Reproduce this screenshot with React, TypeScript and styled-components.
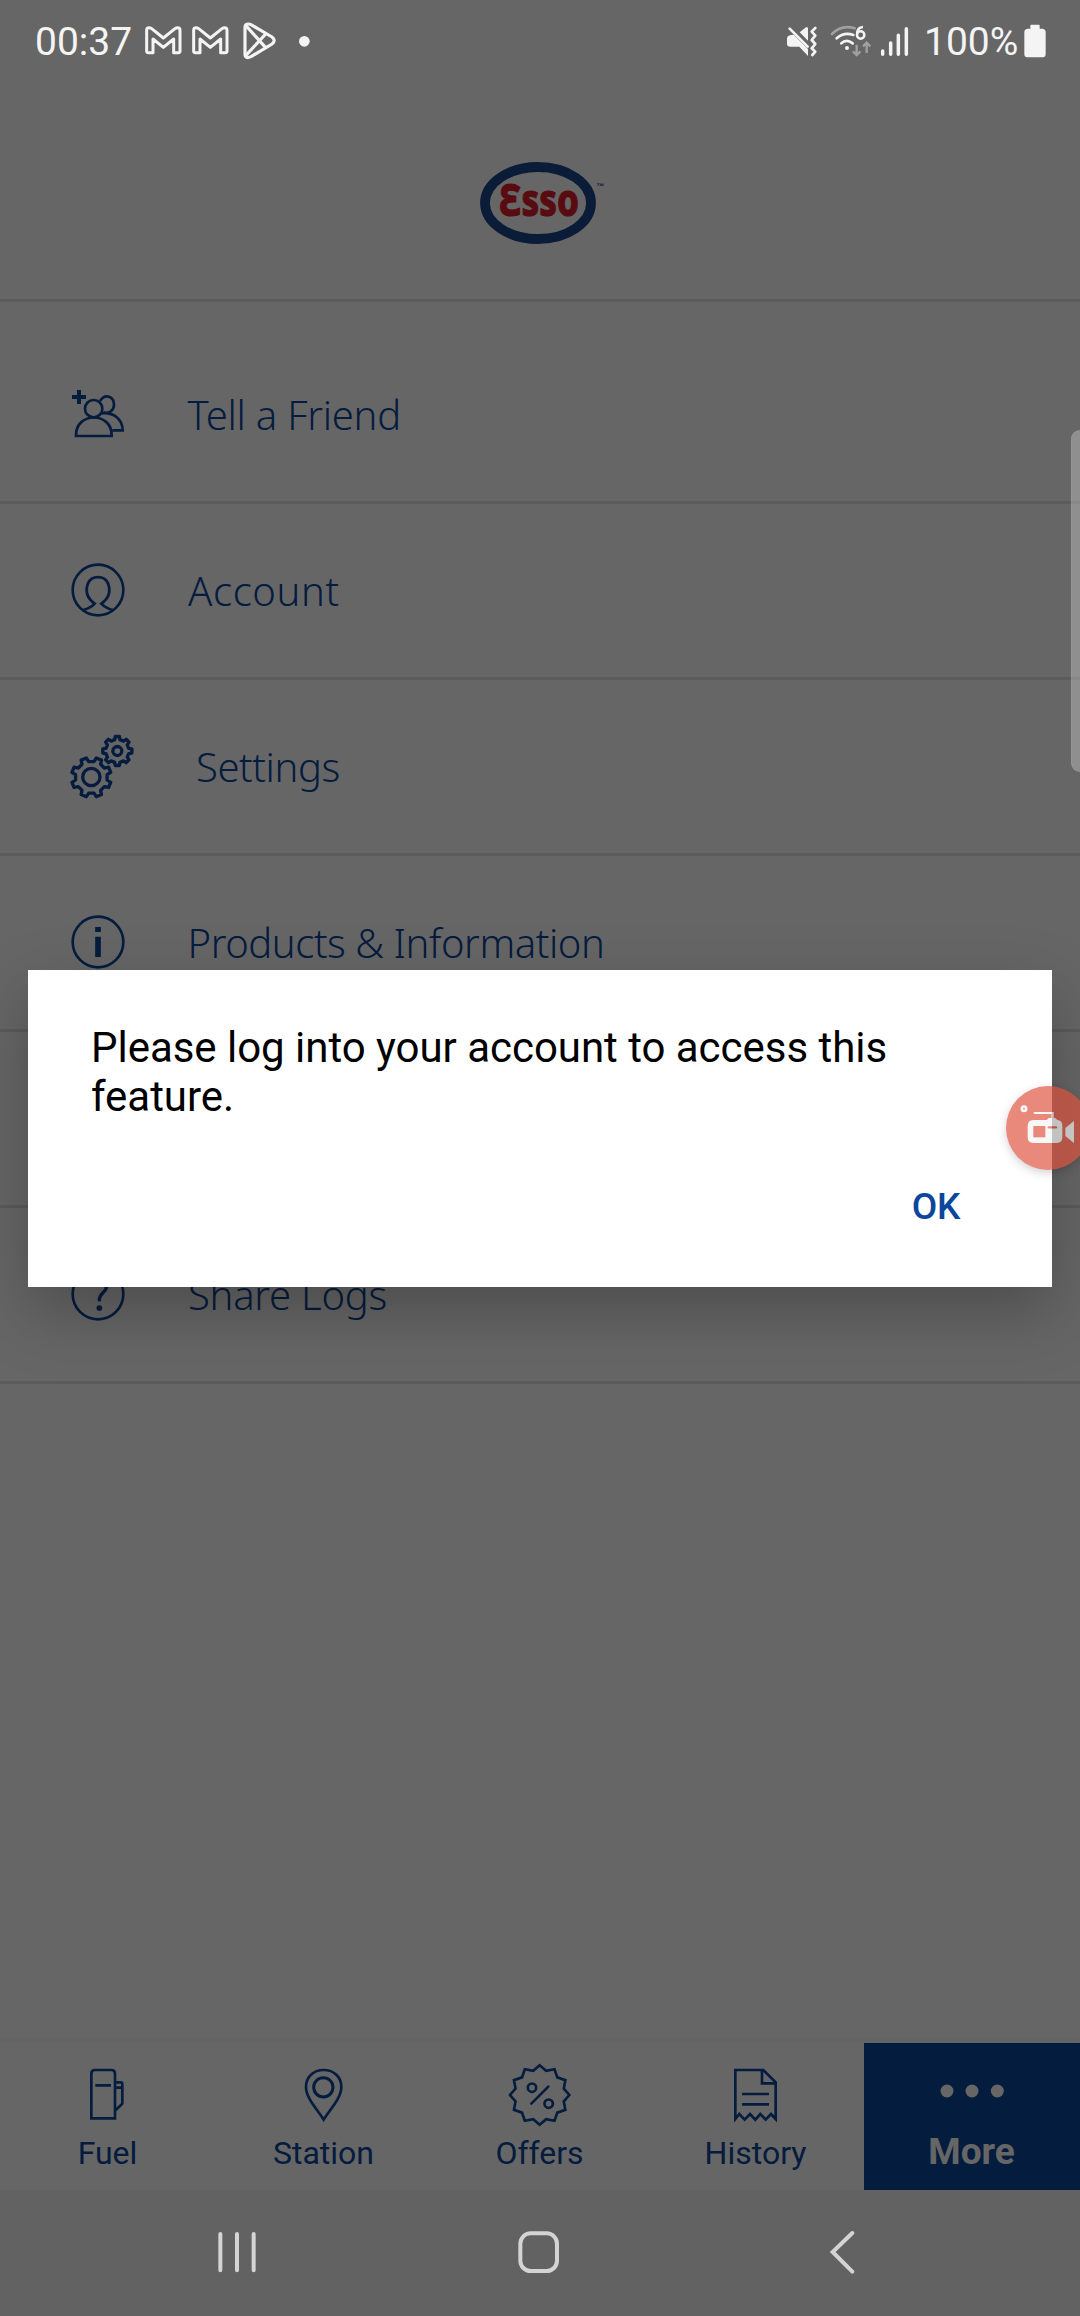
import React from "react";
import styled, { createGlobalStyle } from "styled-components";

const BLUE = "#0c469c";

const GlobalStyle = createGlobalStyle`
  * { box-sizing: border-box; }
  body { margin: 0; background: #fff; font-family: Roboto, "Noto Sans", sans-serif; }
  svg { display: block; flex: none; overflow: visible; }
`;

const Screen = styled.div`
  position: relative;
  display: flex;
  flex-direction: column;
  width: 1080px;
  height: 2316px;
  overflow: hidden;
  background: #fff;
`;

const Scrim = styled.div`
  position: absolute;
  inset: 0;
  z-index: 1;
  background: rgba(0, 0, 0, 0.6);
`;

const StatusBar = styled.div`
  position: relative;
  z-index: 2;
  display: flex;
  justify-content: space-between;
  align-items: center;
  height: 82px;
  padding: 0 34px 0 35px;
  color: #f4f4f4;
  font-size: 39px;
  line-height: 46px;
`;

const StatusGroup = styled.div`
  display: flex;
  align-items: center;
`;

const StatusText = styled.span<{ $width: number }>`
  width: ${(p) => p.$width}px;
  padding-top: 2px;
  white-space: nowrap;
`;

const Header = styled.header`
  display: flex;
  justify-content: center;
  height: 220px;
  padding-top: 76.5px;
  border-bottom: 3px solid #e4e4e4;
`;

const Menu = styled.ul`
  flex: 1;
  margin: 0;
  padding: 26px 0 0;
  list-style: none;
`;

const MenuRow = styled.li`
  display: flex;
  align-items: center;
  height: 176px;
  padding: 0 0 1px 70px;
  border-bottom: 3px solid #e4e4e4;
`;

const MenuIcon = styled.span<{ $width: number }>`
  flex: none;
  width: ${(p) => p.$width}px;
`;

const MenuLabel = styled.span<{ $spacing: number }>`
  padding-top: 1px;
  color: ${BLUE};
  font-family: "Noto Sans", "Open Sans", sans-serif;
  font-weight: 300;
  font-size: 40px;
  line-height: 54px;
  letter-spacing: ${(p) => p.$spacing}px;
  white-space: nowrap;
`;

const TabBar = styled.nav`
  display: flex;
  height: 153px;
  border-top: 6px solid #fafafa;
`;

const Tab = styled.div<{ $active?: boolean }>`
  display: flex;
  flex-direction: column;
  align-items: center;
  justify-content: flex-end;
  width: 216px;
  padding: 0 1px ${(p) => (p.$active ? 18 : 17)}px 0;
  background: ${(p) => (p.$active ? BLUE : "transparent")};
  color: ${(p) => (p.$active ? "#fff" : BLUE)};
  font-size: ${(p) => (p.$active ? 37 : 32)}px;
  font-weight: ${(p) => (p.$active ? 700 : 400)};
  line-height: 40px;
`;

const TabIcon = styled.span<{ $active?: boolean }>`
  display: flex;
  align-items: center;
  justify-content: center;
  height: 74px;
  margin-bottom: ${(p) => (p.$active ? 1 : 2)}px;
`;

const SystemNav = styled.div`
  position: relative;
  z-index: 2;
  display: flex;
  align-items: center;
  height: 126px;
  padding: 0 0 2px 217px;
  background: #626262;
`;

const Dialog = styled.div`
  position: absolute;
  z-index: 3;
  left: 28px;
  top: 970px;
  display: flex;
  flex-direction: column;
  justify-content: space-between;
  width: 1024px;
  height: 317px;
  padding: 53px 91.5px 58px 63px;
  background: #fff;
  box-shadow: 0 24px 60px rgba(0, 0, 0, 0.25);
`;

const Message = styled.p`
  margin: 0;
  color: #000;
  font-size: 42px;
  line-height: 49px;
  letter-spacing: -0.03px;
`;

const OkButton = styled.button`
  align-self: flex-end;
  padding: 0;
  border: 0;
  background: none;
  color: ${BLUE};
  font-family: Roboto, sans-serif;
  font-size: 37px;
  font-weight: 500;
  line-height: 44px;
`;

const EdgeHandle = styled.div`
  position: absolute;
  z-index: 2;
  top: 430px;
  right: 0;
  width: 9.5px;
  height: 342px;
  border: 1px solid rgba(255, 255, 255, 0.06);
  border-right: 0;
  border-radius: 10px 0 0 10px;
  background: rgba(255, 255, 255, 0.27);
`;

const RecordBubble = styled.div`
  position: absolute;
  z-index: 4;
  left: 1006px;
  top: 1086px;
  width: 84px;
  height: 84px;
  border-radius: 50%;
  background: #de523d;
  opacity: 0.68;
  box-shadow: 0 3px 8px rgba(0, 0, 0, 0.25);
`;

type Box = [number, number, number, number];

/* Icons are drawn on a grid three times finer than the layout pixel. */
function Icon({ box, stroke = BLUE, width = 8, children }: {
  box: Box;
  stroke?: string;
  width?: number;
  children: React.ReactNode;
}) {
  return (
    <svg
      viewBox={box.join(" ")}
      width={box[2] / 3}
      height={box[3] / 3}
      fill="none"
      stroke={stroke}
      strokeWidth={width}
    >
      {children}
    </svg>
  );
}

function polar(cx: number, cy: number, r: number, deg: number) {
  const a = ((deg - 90) * Math.PI) / 180;
  return `${(cx + r * Math.cos(a)).toFixed(1)} ${(cy + r * Math.sin(a)).toFixed(1)}`;
}

function gear(cx: number, cy: number, outer: number, inner: number, turn: number) {
  const pts: string[] = [];
  for (let i = 0; i < 8; i++) {
    const a = i * 45 + turn;
    pts.push(polar(cx, cy, inner, a - 13), polar(cx, cy, outer, a - 8));
    pts.push(polar(cx, cy, outer, a + 8), polar(cx, cy, inner, a + 13));
  }
  return `M${pts.join("L")}Z`;
}

function seal(cx: number, cy: number) {
  const pts = Array.from({ length: 24 }, (_, i) => polar(cx, cy, i % 2 ? 75 : 89, i * 15));
  return `M${pts.join("L")}Z`;
}

const Gap = styled.span<{ $w: number }>`
  width: ${(p) => p.$w}px;
`;

const GmailIcon = () => (
  <Icon box={[435, 70, 110, 108]} stroke="#f4f4f4" width={9}>
    <path
      d="M440 92V155Q440 159 445 159H459V118L490 143L521 118V159H535Q540 159 540 155V92Q540 84 533 84Q529 84 525 87L490 115L455 87Q451 84 447 84Q440 84 440 92Z"
      strokeLinejoin="round"
    />
  </Icon>
);

const PlayIcon = () => (
  <Icon box={[730, 68, 100, 112]} stroke="#f4f4f4" width={9.5}>
    <path d="M736 84Q736 74 746 74Q750 74 754 76L817 113Q830 123 817 134L754 172Q736 180 736 164Z" />
    <path d="M738 78L798 145M738 169L798 104" />
  </Icon>
);

const MuteIcon = () => (
  <Icon box={[78, 78, 94, 92]} stroke="none">
    <path d="M81 117Q81 108 90 106L101 104L144 147V168L118 140H91Q81 140 81 131Z" fill="#f4f4f4" />
    <path d="M119 97L136 83Q144 77 144 87V122Z" fill="#f4f4f4" />
    <path d="M89 86L143 140" stroke="#f4f4f4" strokeWidth="8" strokeLinecap="round" />
    <path d="M166 84L155 95L166 107L155 120L166 132L155 145L166 155L157 165" stroke="#f4f4f4" strokeWidth="8" strokeLinejoin="round" strokeLinecap="round" />
  </Icon>
);

const WifiIcon = () => (
  <Icon box={[214, 78, 122, 94]} width={8}>
    <path d="M217 105Q246 76 285 88" stroke="#a0a0a0" strokeLinecap="round" />
    <path d="M231 118Q253 98 281 108M245 133Q261 119 279 133" stroke="#f4f4f4" strokeLinecap="round" />
    <circle cx="262" cy="147" r="6" fill="#f4f4f4" stroke="none" />
    <path d="M310 84C295 85 292 96 292 106" stroke="#f4f4f4" strokeWidth="7" />
    <circle cx="303" cy="108" r="11" stroke="#f4f4f4" strokeWidth="7.500" />
    <path d="M291 137V168M280 157L291 168L302 157M321 162V132M310 142L321 131L332 142" stroke="#a0a0a0" strokeWidth="7" />
  </Icon>
);

const SignalIcon = () => (
  <Icon box={[364, 78, 82, 92]} stroke="#f4f4f4" width={10.5}>
    <path d="M369 153V163M393 129V163M416 106V163M440 86V163" strokeLinecap="round" />
  </Icon>
);

const BatteryIcon = () => (
  <Icon box={[791, 74, 66, 101]} stroke="none">
    <path d="M810 79Q810 76 813 76H835Q838 76 838 79V88H847Q856 90 856 98V164Q856 174 847 174H801Q792 174 792 164V98Q792 90 801 88H810Z" fill="#f4f4f4" />
  </Icon>
);

const LogoSlot = styled.div`
  padding-left: 2px;
`;

const EssoLogo = () => (
  <svg viewBox="476 158 130 88" width="130" height="88" role="img" aria-label="Esso">
    <ellipse cx="538" cy="202" rx="53" ry="36" fill="#fff" stroke="#1c468c" strokeWidth="9.800" />
    <text
      x="499"
      y="214.500"
      fill="#dc1c28"
      stroke="#dc1c28"
      strokeWidth="1"
      strokeLinejoin="round"
      fontFamily="'Noto Sans', sans-serif"
      fontWeight="800"
      fontSize="44"
      textLength="80"
      lengthAdjust="spacingAndGlyphs"
    >
      Ɛsso
    </text>
    <text x="596.500" y="188" fill="#1c468c" fontSize="8" fontWeight="700" fontFamily="'Liberation Sans', sans-serif">™</text>
  </svg>
);

const FriendsIcon = () => (
  <Icon box={[90, 90, 168, 150]}>
    <path d="M96 114H138M117 93V135" strokeWidth="12" />
    <circle cx="161" cy="149" r="26" />
    <path d="M108 231V228C108 158 215 158 215 228V231Z" />
    <path d="M180 126C196 102 222 113 222 137C222 154 207 165 190 160M184 163C220 158 248 180 248 214H217" />
  </Icon>
);

const AccountIcon = () => (
  <Icon box={[90, 606, 168, 168]}>
    <circle cx="174" cy="690" r="76" />
    <path d="M130 750C146 746 154 742 164 731C138 713 137 689 144 670C155 645 193 645 204 670C211 689 210 713 184 731C194 742 202 746 218 750" strokeWidth="8.500" />
  </Icon>
);

const SettingsIcon = () => (
  <Icon box={[90, 220, 192, 194]} width={10}>
    <g strokeLinejoin="round">
      <path d={gear(232, 271, 44, 35, 0)} />
      <path d={gear(154, 350, 60, 48, 22.5)} />
    </g>
    <circle cx="232" cy="271" r="13.500" />
    <circle cx="154" cy="349" r="26" />
  </Icon>
);

const InfoIcon = () => (
  <Icon box={[90, 72, 168, 168]}>
    <circle cx="174" cy="156" r="76" />
    <path d="M174 111V126M174 140V201" strokeWidth="17" />
  </Icon>
);

const HelpIcon = () => (
  <Icon box={[210, 198, 168, 168]}>
    <circle cx="294" cy="282" r="76" />
    <path d="M274 254C275 233 320 232 320 257C320 278 298 277 298 300" strokeWidth="10" strokeLinecap="round" />
    <circle cx="298" cy="324" r="8.500" fill={BLUE} stroke="none" />
  </Icon>
);

const FuelIcon = () => (
  <Icon box={[270, 112, 106, 222]}>
    <path d="M274 296V162Q274 151 285 151H334Q345 151 345 162V296ZM286 197H333M345 188H362Q367 188 367 193V252L345 273M345 204H367" />
  </Icon>
);

const StationIcon = () => (
  <Icon box={[909, 112, 122, 222]}>
    <path d="M971 300C954 271 918 237 918 202C918 172 940 151 971 151C1002 151 1024 172 1024 202C1024 237 988 271 971 300Z" />
    <circle cx="970" cy="203" r="29" strokeWidth="9" />
  </Icon>
);

const OffersIcon = () => (
  <Icon box={[260, 112, 196, 222]}>
    <path d={seal(358, 226)} />
    <circle cx="335" cy="204" r="12.500" />
    <circle cx="385" cy="252" r="12.500" />
    <path d="M333 252L384 201" strokeLinecap="round" strokeWidth="8" />
  </Icon>
);

const HistoryIcon = () => (
  <Icon box={[942, 112, 130, 222]}>
    <path d="M946 298V151H1030L1067 188V298L1053 283L1037 300L1021 283L1006 300L990 283L974 300L958 283ZM1026 151V191H1067M966 223H1047M966 254H1047" />
  </Icon>
);

const MoreIcon = () => (
  <Icon box={[475, 109, 196, 222]} stroke="none">
    <g fill="#fff">
      <circle cx="499" cy="211" r="19.500" />
      <circle cx="574" cy="211" r="19.500" />
      <circle cx="650" cy="211" r="19.500" />
    </g>
  </Icon>
);

const NavItem = styled.span<{ $before: number }>`
  margin-left: ${(p) => p.$before}px;
`;

const rows = [
  { label: "Tell a Friend", icon: <FriendsIcon />, slot: 117.5, spacing: -0.25 },
  { label: "Account", icon: <AccountIcon />, slot: 118, spacing: 0.65 },
  { label: "Settings", icon: <SettingsIcon />, slot: 126, spacing: -0.4 },
  { label: "Products & Information", icon: <InfoIcon />, slot: 117.5, spacing: -0.43 },
  { label: "", icon: null, slot: 117, spacing: 0 },
  { label: "Share Logs", icon: <HelpIcon />, slot: 118, spacing: -0.25 },
];

const tabs = [
  { label: "Fuel", icon: <FuelIcon /> },
  { label: "Station", icon: <StationIcon /> },
  { label: "Offers", icon: <OffersIcon /> },
  { label: "History", icon: <HistoryIcon /> },
  { label: "More", icon: <MoreIcon />, active: true },
];

export default function App() {
  return (
    <>
      <GlobalStyle />
      <Screen>
        <StatusBar>
          <StatusGroup>
            <StatusText $width={110}>00:37</StatusText>
            <GmailIcon />
            <Gap $w={10.5} />
            <GmailIcon />
            <Gap $w={14.5} />
            <PlayIcon />
            <Gap $w={22} />
            <Icon box={[896, 108, 32, 32]} stroke="none">
              <circle cx="912" cy="124" r="16" fill="#f4f4f4" />
            </Icon>
          </StatusGroup>
          <StatusGroup>
            <MuteIcon />
            <Gap $w={14} />
            <WifiIcon />
            <Gap $w={9.5} />
            <SignalIcon />
            <Gap $w={15.5} />
            <StatusText $width={100}>100%</StatusText>
            <BatteryIcon />
          </StatusGroup>
        </StatusBar>
        <Header>
          <LogoSlot>
            <EssoLogo />
          </LogoSlot>
        </Header>
        <Menu>
          {rows.map((row, i) => (
            <MenuRow key={i}>
              <MenuIcon $width={row.slot}>{row.icon}</MenuIcon>
              <MenuLabel $spacing={row.spacing}>{row.label}</MenuLabel>
            </MenuRow>
          ))}
        </Menu>
        <TabBar>
          {tabs.map((tab) => (
            <Tab key={tab.label} $active={tab.active}>
              <TabIcon $active={tab.active}>{tab.icon}</TabIcon>
              {tab.label}
            </Tab>
          ))}
        </TabBar>
        <SystemNav>
          <Icon box={[651, 632, 120, 126]} stroke="#d4d4d4" width={12}>
            <path d="M661 641V750M711 641V750M761 641V750" strokeLinecap="round" />
          </Icon>
          <NavItem $before={261.3}>
            <Icon box={[295, 632, 124, 126]} stroke="#d4d4d4" width={12}>
              <rect x="302" y="639" width="110" height="113" rx="31" />
            </Icon>
          </NavItem>
          <NavItem $before={270.3}>
            <Icon box={[150, 632, 72, 126]} stroke="#d4d4d4" width={12}>
              <path d="M217 638L158 695L217 754" strokeLinecap="round" />
            </Icon>
          </NavItem>
        </SystemNav>
        <Scrim />
        <EdgeHandle />
        <Dialog>
          <Message>Please log into your account to access this feature.</Message>
          <OkButton>OK</OkButton>
        </Dialog>
        <RecordBubble>
          <Icon box={[440, 378, 252, 252]} stroke="#f4f4f4">
            <circle cx="494" cy="446" r="6.500" />
            <path d="M526 459H580V480" strokeLinecap="round" strokeWidth="6.500" />
            <path d="M522 480H562L568 474H588L594 480Q609 482 609 498V532Q609 549 592 549H522Q505 549 505 532V498Q505 480 522 480Z" fill="#f4f4f4" stroke="none" />
            <path d="M522 498H558V532H522Z" fill="#de523d" stroke="none" />
            <path d="M569 502H590" stroke="#de523d" strokeWidth="7" strokeLinecap="round" />
            <path d="M618 504L644 483V549L618 528Z" fill="#f4f4f4" stroke="none" />
          </Icon>
        </RecordBubble>
      </Screen>
    </>
  );
}
